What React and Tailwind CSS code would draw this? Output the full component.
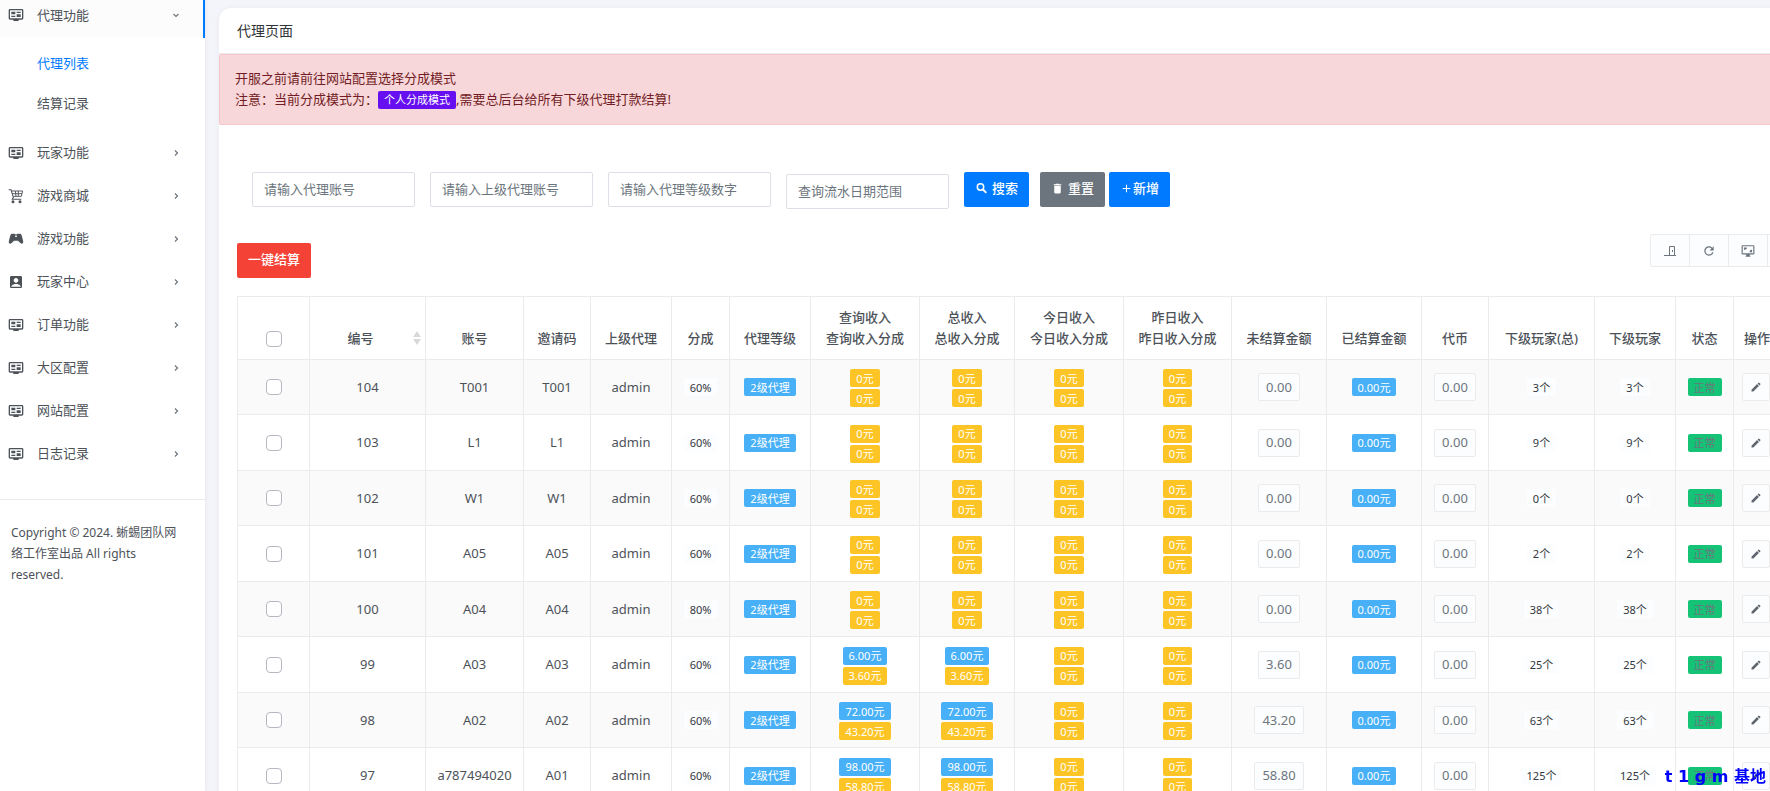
import React, { useState } from 'react'
import { MdAccountBox, MdAdd, MdDelete, MdEdit, MdRefresh } from 'react-icons/md'

function GuideIcon() {
  return (
    <svg viewBox="0 0 24 24" className="size-4" fill="currentColor">
      <path d="M21 17V5H3v12h18m0-14a2 2 0 0 1 2 2v12a2 2 0 0 1-2 2h-5v2H8v-2H3a2 2 0 0 1-2-2V5a2 2 0 0 1 2-2h18M5 7h6v4H5V7m0 6h6v2H5v-2m8-6h6v2h-6V7m0 4h6v4h-6v-4Z" />
    </svg>
  )
}

function CartIcon() {
  return (
    <svg viewBox="0 0 24 24" className="size-4" fill="none" stroke="currentColor" strokeWidth="1.600">
      <path d="M1 2.500h3.500l3.500 11.500-1.500 3H20" />
      <path d="M5 4.500h17L20 12.500H8M6 8.500h15M11 4.500l1 8M15.500 4.500v8" strokeWidth="1.400" />
      <circle cx="7.500" cy="20.500" r="1.500" fill="currentColor" />
      <circle cx="18" cy="20.500" r="1.500" fill="currentColor" />
    </svg>
  )
}

function ControllerIcon() {
  return (
    <svg viewBox="0 0 24 24" className="size-4" fill="currentColor">
      <path d="M6.500 4h3l1 1h3l1-1h3c1.500 0 2.500 1 3 2.500l2.200 8.500c.6 2.500-.4 4-2 4-1.200 0-2-.6-3-1.700L15 14.500H9l-2.700 2.800c-1 1.100-1.800 1.700-3 1.700-1.600 0-2.600-1.500-2-4l2.200-8.500C4 5 5 4 6.500 4ZM12 6.500A1.300 1.300 0 1 0 12 9.100 1.300 1.300 0 0 0 12 6.500Z" />
    </svg>
  )
}

function SearchIcon() {
  return (
    <svg viewBox="0 0 13 13" className="size-[13px]" fill="none" stroke="currentColor">
      <circle cx="5.500" cy="5" r="3.200" strokeWidth="1.500" />
      <path d="m8 7.500 3.300 3.300" strokeWidth="1.900" />
    </svg>
  )
}

function DoorIcon() {
  return (
    <svg viewBox="0 0 12 12" className="size-3" fill="none" stroke="currentColor">
      <path d="M0 10.500h12M5.500 10V1.500h5V10" />
      <path d="M8.500 5v2" />
    </svg>
  )
}

function ScreenIcon() {
  return (
    <svg viewBox="0 0 24 24" className="size-3.5" fill="currentColor">
      <path d="M21 2H3a2 2 0 0 0-2 2v12a2 2 0 0 0 2 2h6v2H8v2h8v-2h-1v-2h6a2 2 0 0 0 2-2V4a2 2 0 0 0-2-2m0 14H3V4h18v12M5 10h2l3-2V6H5v4m14 0h-2l-2 2v2h4v-4Z" />
    </svg>
  )
}

function ListIcon() {
  return (
    <svg viewBox="0 0 24 24" className="size-3.5" fill="currentColor">
      <path d="M3 4h4v4H3V4m6 1v2h12V5H9M3 10h4v4H3v-4m6 1v2h12v-2H9m-6 5h4v4H3v-4m6 1v2h12v-2H9" />
    </svg>
  )
}

function Chevron({ open }) {
  return (
    <svg viewBox="0 0 8 8" className="size-2 text-[#6c757d]" fill="none" stroke="currentColor" strokeWidth="1.200">
      <path d={open ? 'M1.500 3 4 5.500 6.500 3' : 'M3 1.500 5.500 4 3 6.500'} />
    </svg>
  )
}

const menu = [
  { name: '玩家功能', icon: <GuideIcon /> },
  { name: '游戏商城', icon: <CartIcon /> },
  { name: '游戏功能', icon: <ControllerIcon /> },
  { name: '玩家中心', icon: <MdAccountBox className="size-4" /> },
  { name: '订单功能', icon: <GuideIcon /> },
  { name: '大区配置', icon: <GuideIcon /> },
  { name: '网站配置', icon: <GuideIcon /> },
  { name: '日志记录', icon: <GuideIcon /> },
]

const columns = [
  { title: '账号', width: 'w-[98px]' },
  { title: '邀请码', width: 'w-[67px]' },
  { title: '上级代理', width: 'w-[81px]' },
  { title: '分成', width: 'w-[58px]' },
  { title: '代理等级', width: 'w-[81px]' },
  { title: '查询收入', sub: '查询收入分成', width: 'w-[109px]' },
  { title: '总收入', sub: '总收入分成', width: 'w-[95px]' },
  { title: '今日收入', sub: '今日收入分成', width: 'w-[109px]' },
  { title: '昨日收入', sub: '昨日收入分成', width: 'w-[108px]' },
  { title: '未结算金额', width: 'w-[95px]' },
  { title: '已结算金额', width: 'w-[95px]' },
  { title: '代币', width: 'w-[67px]' },
  { title: '下级玩家(总)', width: 'w-[106px]' },
  { title: '下级玩家', width: 'w-[81px]' },
  { title: '状态', width: 'w-[58px]' },
]

const agents = [
  { id: 104, account: 'T001', code: 'T001', rate: '60%', income: '0', share: '0', unpaid: '0.00', players: 3 },
  { id: 103, account: 'L1', code: 'L1', rate: '60%', income: '0', share: '0', unpaid: '0.00', players: 9 },
  { id: 102, account: 'W1', code: 'W1', rate: '60%', income: '0', share: '0', unpaid: '0.00', players: 0 },
  { id: 101, account: 'A05', code: 'A05', rate: '60%', income: '0', share: '0', unpaid: '0.00', players: 2 },
  { id: 100, account: 'A04', code: 'A04', rate: '80%', income: '0', share: '0', unpaid: '0.00', players: 38 },
  { id: 99, account: 'A03', code: 'A03', rate: '60%', income: '6.00', share: '3.60', unpaid: '3.60', players: 25 },
  { id: 98, account: 'A02', code: 'A02', rate: '60%', income: '72.00', share: '43.20', unpaid: '43.20', players: 63 },
  { id: 97, account: 'a787494020', code: 'A01', rate: '60%', income: '98.00', share: '58.80', unpaid: '58.80', players: 125 },
]

const badgeColors = {
  blue: 'bg-[#48b0f7] text-white',
  yellow: 'bg-[#fdc425] text-white',
  green: 'bg-[#15c377] text-[#6c757d]',
  light: 'bg-[#fcfdfe] text-[#33373d]',
}

function Badge({ color, children }) {
  return (
    <span className={`inline-flex h-[18px] items-center rounded-xs px-1.5 text-[11px] leading-none ${badgeColors[color]}`}>
      {children}
    </span>
  )
}

function Income({ total, share }) {
  return (
    <div className="flex flex-col items-center gap-0.5 pt-0.5">
      <Badge color={total === '0' ? 'yellow' : 'blue'}>{total}元</Badge>
      <Badge color="yellow">{share}元</Badge>
    </div>
  )
}

function Amount({ children }) {
  return (
    <button className="h-7 rounded-xs border border-[#ebebeb] bg-[#fcfdfe] px-[7px] text-[#6c757d]">{children}</button>
  )
}

function Check({ label, checked, onChange }) {
  return (
    <div className="flex h-[21px] items-center justify-center">
      <input
        type="checkbox"
        aria-label={label}
        checked={checked}
        onChange={onChange}
        className="size-4 appearance-none rounded-sm border border-[#b5b9bf] bg-white checked:bg-[#007bff]"
      />
    </div>
  )
}

function Sidebar() {
  return (
    <aside className="z-10 w-[205px] shrink-0 bg-white shadow-[0_0_5px_rgba(0,0,0,0.08)]">
      <nav>
        <a href="#agent" className="flex h-[38px] items-center border-r-2 border-[#007bff] bg-[#fcfcfc] pb-2 pl-2 pr-[23px]">
          <GuideIcon />
          <span className="ml-[13px] flex-1">代理功能</span>
          <Chevron open />
        </a>
        <div className="flex flex-col pt-[5px] pb-2">
          <a href="#list" className="flex h-10 items-center pl-[37px] text-[#007bff]">代理列表</a>
          <a href="#records" className="flex h-10 items-center pl-[37px]">结算记录</a>
        </div>
        {menu.map((item) => (
          <a key={item.name} href="#menu" className="flex h-[43px] items-center pl-2 pr-[25px]">
            {item.icon}
            <span className="ml-[13px] flex-1">{item.name}</span>
            <Chevron />
          </a>
        ))}
      </nav>
      <footer className="mt-6 border-t border-[#ebebeb] py-[22px] pl-[11px] pr-6 text-xs leading-[21px]">
        Copyright © 2024. 蜥蜴团队网络工作室出品 All rights reserved.
      </footer>
    </aside>
  )
}

function Filters() {
  const field = 'block h-[35px] w-[163px] rounded-xs border border-[#dcdfe6] px-[11px] pb-0.5 placeholder:text-[#6c757d]'
  const button = 'flex h-[35px] items-center rounded-xs pb-0.5 font-medium text-white'
  return (
    <form className="flex items-start pl-[33px]" onSubmit={(e) => e.preventDefault()}>
      <div className="flex gap-[15px]">
        <input aria-label="代理账号" className={field} placeholder="请输入代理账号" />
        <input aria-label="上级代理账号" className={field} placeholder="请输入上级代理账号" />
        <input aria-label="代理等级" className={field} placeholder="请输入代理等级数字" />
        <div className="pt-0.5">
          <input aria-label="日期范围" className={field} placeholder="查询流水日期范围" />
        </div>
      </div>
      <button type="submit" className={`${button} ml-[15px] gap-1 bg-[#007bff] px-[11px]`}>
        <SearchIcon />
        搜索
      </button>
      <button type="reset" className={`${button} ml-[11px] gap-1 bg-[#6c757d] px-[11px]`}>
        <MdDelete className="size-[13px]" />
        重置
      </button>
      <button type="button" className={`${button} ml-1 bg-[#007bff] px-[11px]`}>
        <MdAdd className="size-[13px]" />
        新增
      </button>
    </form>
  )
}

function AgentTable() {
  const [selected, setSelected] = useState([])
  const allSelected = selected.length === agents.length

  const toggle = (id) => {
    setSelected(selected.includes(id) ? selected.filter((item) => item !== id) : [...selected, id])
  }

  return (
    <table className="w-max border-collapse whitespace-nowrap text-center [&_td]:border [&_td]:border-[#ebebeb] [&_th]:border [&_th]:border-[#ebebeb]">
      <thead>
        <tr className="align-bottom leading-[21px] [&>th]:py-2.5 [&>th]:font-medium">
          <th className="w-[72px]">
            <Check
              label="全选"
              checked={allSelected}
              onChange={() => setSelected(allSelected ? [] : agents.map((agent) => agent.id))}
            />
          </th>
          <th className="w-[116px] px-1">
            <div className="flex items-center gap-1.5">
              <span className="flex-1">编号</span>
              <svg viewBox="0 0 8 14" className="mb-0.5 h-3.5 w-2" fill="#d9d9d9">
                <path d="M4 0 8 6H0ZM4 14 0 8h8Z" />
              </svg>
            </div>
          </th>
          {columns.map((column) => (
            <th key={column.title} className={column.width}>
              {column.title}
              {column.sub && <div>{column.sub}</div>}
            </th>
          ))}
          <th className="w-[74px] pl-2.5 text-left">操作</th>
        </tr>
      </thead>
      <tbody>
        {agents.map((agent) => (
          <tr key={agent.id} className="odd:h-[55px] odd:bg-[#fafafa] even:h-14">
            <td>
              <Check label={`选择 ${agent.id}`} checked={selected.includes(agent.id)} onChange={() => toggle(agent.id)} />
            </td>
            <td>{agent.id}</td>
            <td>{agent.account}</td>
            <td>{agent.code}</td>
            <td>admin</td>
            <td><Badge color="light">{agent.rate}</Badge></td>
            <td><Badge color="blue">2级代理</Badge></td>
            <td><Income total={agent.income} share={agent.share} /></td>
            <td><Income total={agent.income} share={agent.share} /></td>
            <td><Income total="0" share="0" /></td>
            <td><Income total="0" share="0" /></td>
            <td><Amount>{agent.unpaid}</Amount></td>
            <td><Badge color="blue">0.00元</Badge></td>
            <td><Amount>0.00</Amount></td>
            <td><Badge color="light">{agent.players}个</Badge></td>
            <td><Badge color="light">{agent.players}个</Badge></td>
            <td><Badge color="green">正常</Badge></td>
            <td className="pl-2">
              <button aria-label="编辑" className="flex size-7 items-center justify-center rounded-xs border border-[#ebebeb] bg-[#fcfdfe] text-[#5f666d]">
                <MdEdit className="size-3" />
              </button>
            </td>
          </tr>
        ))}
      </tbody>
    </table>
  )
}

function App() {
  const tools = [
    { name: '切换视图', icon: <DoorIcon /> },
    { name: '刷新', icon: <MdRefresh className="size-3.5" /> },
    { name: '全屏', icon: <ScreenIcon /> },
    { name: '列', icon: <ListIcon /> },
  ]

  return (
    <div className="flex h-screen overflow-hidden bg-[#f3f5fa] font-['Noto_Sans','Noto_Sans_CJK_SC',sans-serif] text-[13px] leading-[21px] text-[#4d5259]">
      <Sidebar />

      <main className="min-w-0 flex-1 overflow-hidden pl-3.5 pt-2">
        <div className="w-max min-w-full rounded-xl bg-white shadow-[0_0_5px_rgba(0,0,0,0.05)]">
          <h1 className="border-b border-[#ebebeb] px-[18px] pt-3 pb-3 text-sm leading-[21px] text-[#313539]">代理页面</h1>

          <div className="rounded-xs border border-[#f5c6cb] bg-[#f8d7da] px-[15px] pt-[13px] pb-3.5 text-[#721c24]">
            <p>开服之前请前往网站配置选择分成模式</p>
            <p>
              注意：当前分成模式为：
              <span className="inline-flex h-[18px] items-center rounded-xs bg-[#6610f2] px-1.5 text-[11px] leading-none text-white">
                个人分成模式
              </span>
              ,需要总后台给所有下级代理打款结算!
            </p>
          </div>

          <div className="px-[18px] pt-[47px]">
            <div className="-ml-[18px]">
              <Filters />
            </div>

            <div className="mt-[25px] flex items-start justify-between">
              <button className="mt-[9px] h-[35px] rounded-xs bg-[#f44336] px-[11px] pb-0.5 font-medium text-white">一键结算</button>
              <div className="flex rounded-xs border border-[#ebebeb] bg-[#fcfdfe] text-[#6c757d]">
                {tools.map((tool) => (
                  <button
                    key={tool.name}
                    aria-label={tool.name}
                    className="flex h-[31px] w-[39px] items-center justify-center border-r border-[#ebebeb] last:border-r-0"
                  >
                    {tool.icon}
                  </button>
                ))}
              </div>
            </div>

            <div className="mt-[18px]">
              <AgentTable />
            </div>
          </div>
        </div>
      </main>

      <div className="pointer-events-none fixed right-1 bottom-0.5 z-20 font-['DejaVu_Sans','Noto_Sans_CJK_SC',sans-serif] text-base font-bold text-[#0000ff]">
        t 1 g m 基地
      </div>
    </div>
  )
}

export default App
